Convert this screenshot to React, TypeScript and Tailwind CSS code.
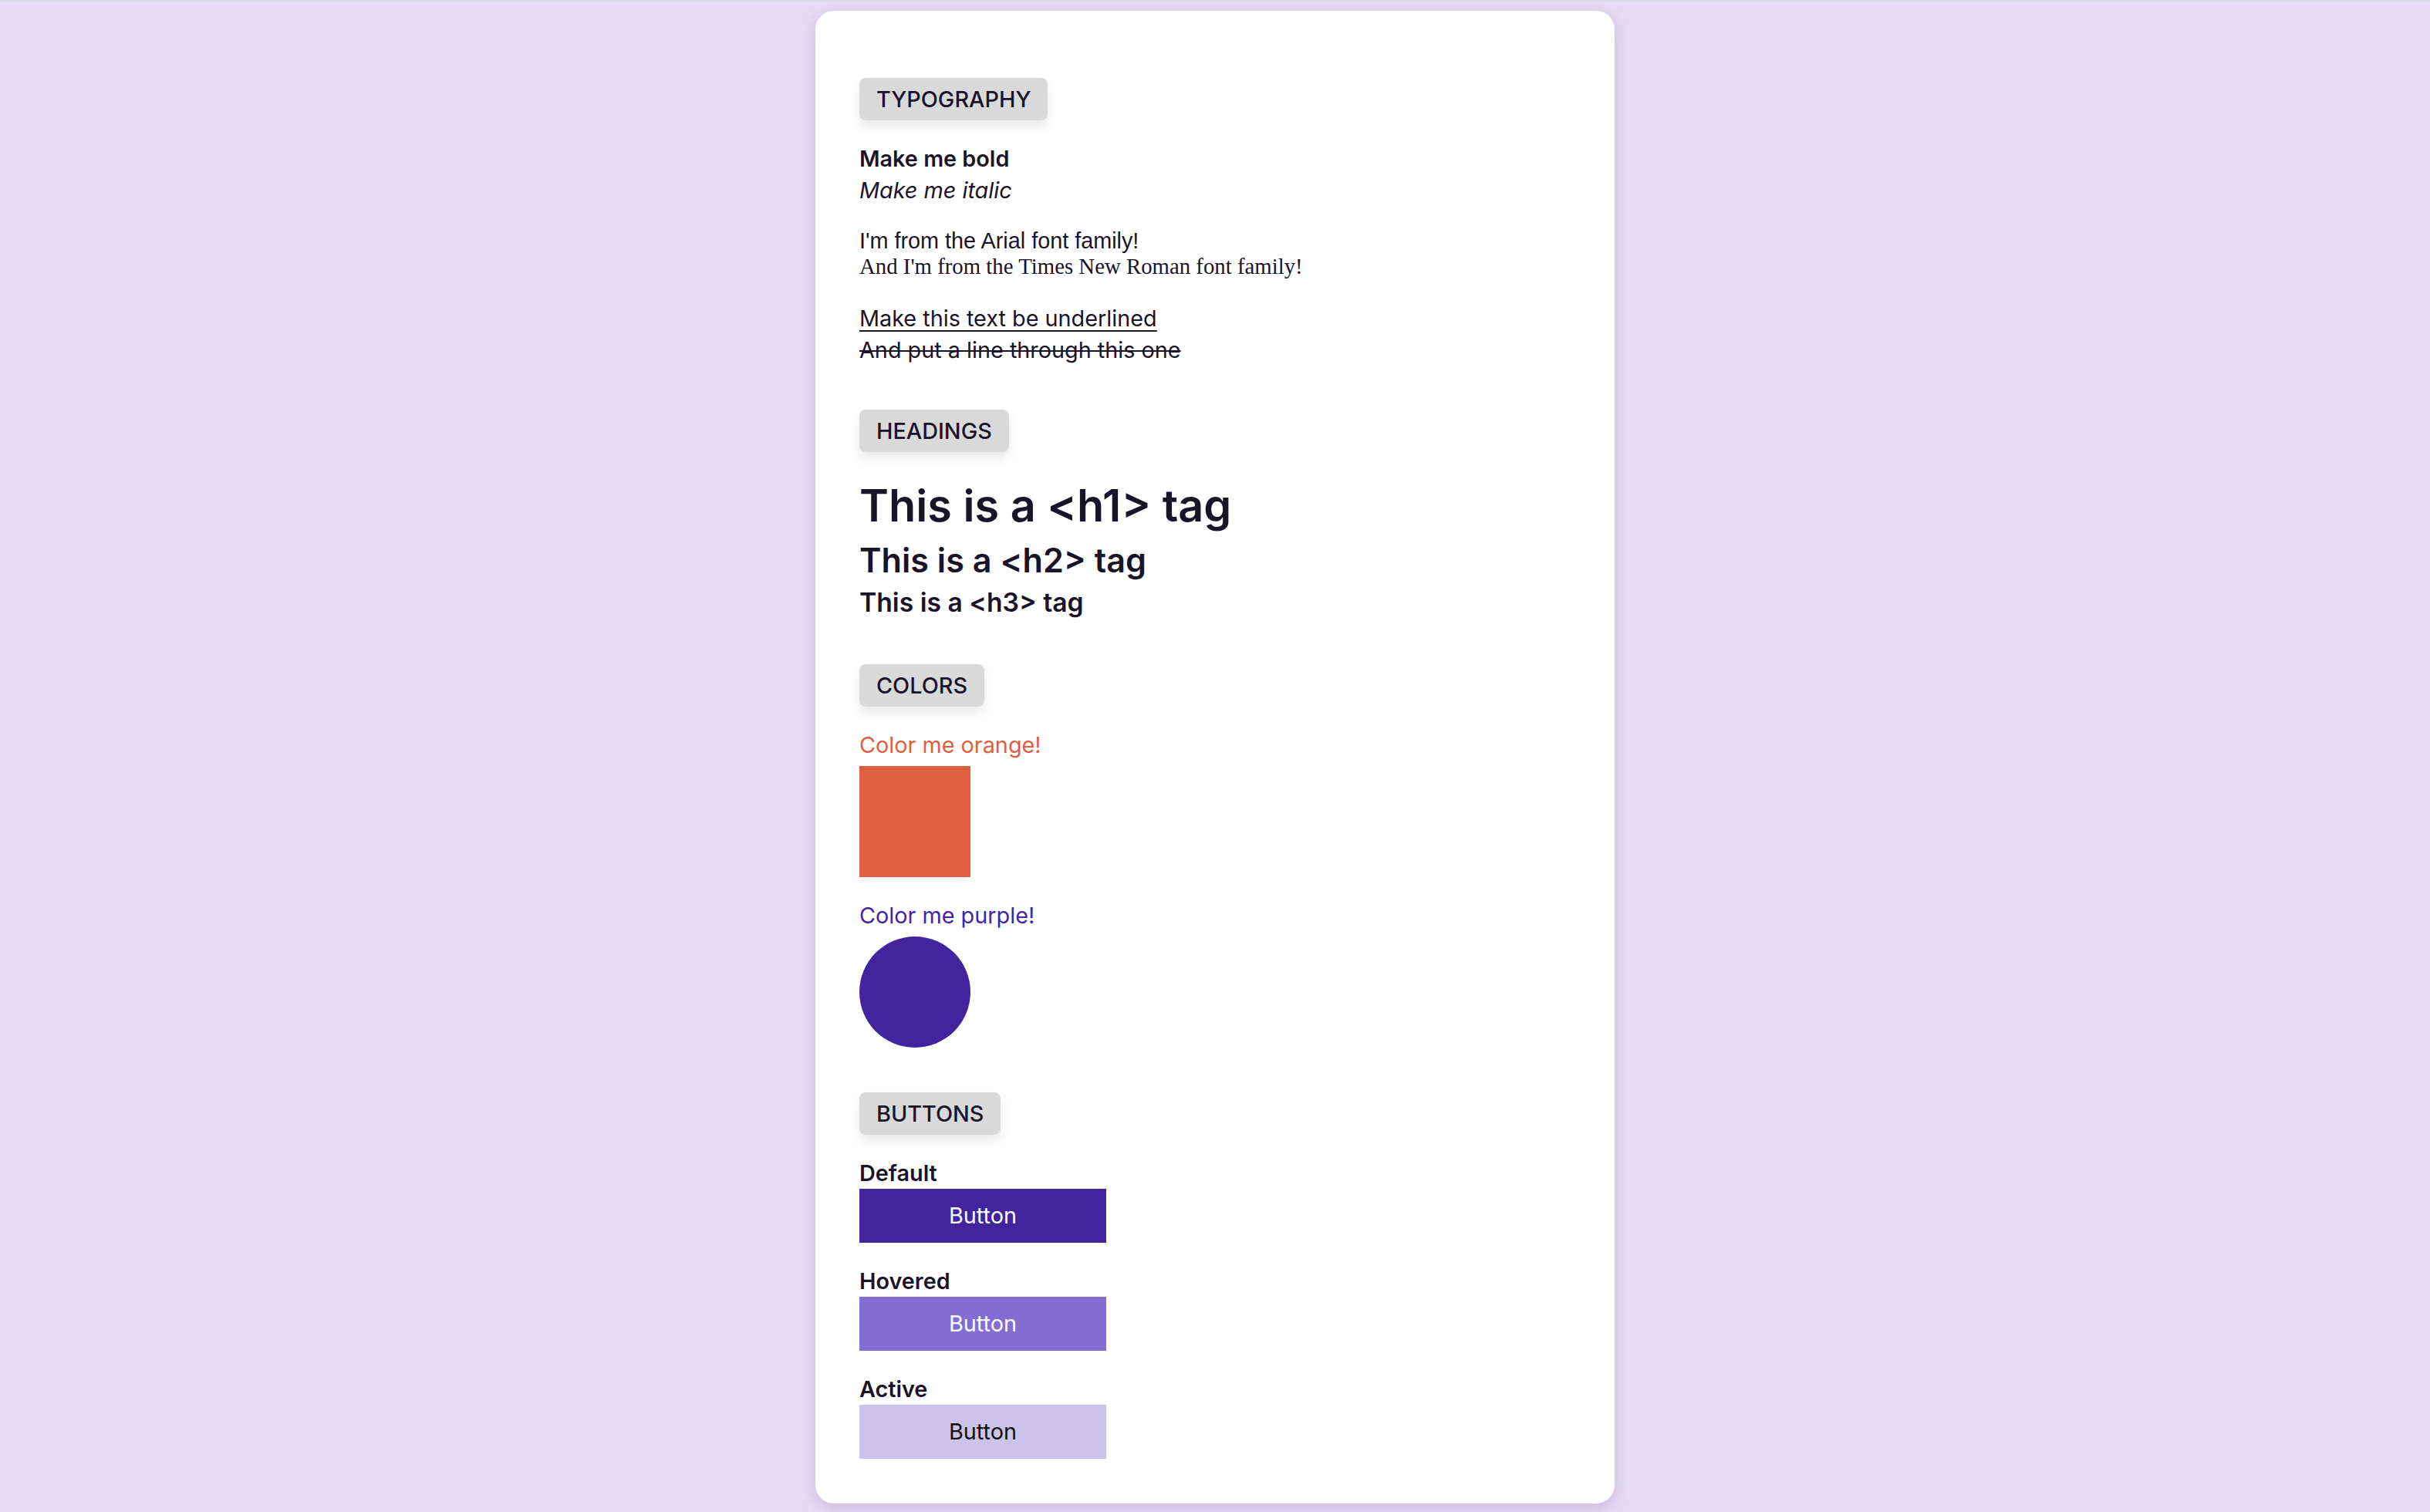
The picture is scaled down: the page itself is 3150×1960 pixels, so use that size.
import React from "react";

const ink = "text-[#1a1429]";

function Label({ children }: { children: React.ReactNode }) {
  return (
    <div className="flex">
      <div className="flex items-center h-[55px] px-[22px] rounded-[8px] bg-[#d9d9d9] shadow-[0_8px_14px_rgba(0,0,0,0.09)] text-[28.8px] leading-[34px] font-medium text-[#1a1429]">
        {children}
      </div>
    </div>
  );
}

function ButtonDemo({ title, bg, fg }: { title: string; bg: string; fg: string }) {
  return (
    <div className="flex flex-col">
      <div className={`text-[28.8px] leading-[41px] font-semibold ${ink}`}>{title}</div>
      <div className={`w-[320px] h-[70px] flex items-center justify-center text-[28.8px] leading-[34px] ${bg} ${fg}`}>
        Button
      </div>
    </div>
  );
}

export default function App() {
  return (
    <div className="min-h-screen bg-[#e6daf5] flex flex-col" style={{ fontFamily: "Inter, 'Noto Sans', sans-serif" }}>
      <div className="h-[2px] bg-[#dcdce4]" />
      <div className="flex justify-center pt-[12px] pb-[10px]">
        <div className="w-[1036px] bg-white rounded-[24px] shadow-[0_6px_18px_rgba(70,40,130,0.18)] pl-[57px] pr-[57px] pt-[87px] pb-[58px] flex flex-col">
          {/* TYPOGRAPHY */}
          <Label>TYPOGRAPHY</Label>
          <div className={`mt-[29px] text-[28.8px] leading-[41px] font-semibold ${ink}`}>Make me bold</div>
          <div className={`text-[28.8px] leading-[41px] italic ${ink}`}>Make me italic</div>
          <div className={`mt-[29px] text-[28.8px] leading-[33px] ${ink}`} style={{ fontFamily: "'Liberation Sans', Arial, sans-serif" }}>
            I'm from the Arial font family!
          </div>
          <div className={`text-[28.8px] leading-[33px] ${ink}`} style={{ fontFamily: "'Liberation Serif', 'Times New Roman', serif" }}>
            And I'm from the Times New Roman font family!
          </div>
          <div className={`mt-[30px] text-[28.8px] leading-[41px] underline decoration-[2px] underline-offset-[5px] ${ink}`}>
            Make this text be underlined
          </div>
          <div className={`text-[28.8px] leading-[41px] line-through decoration-[2px] ${ink}`}>And put a line through this one</div>

          {/* HEADINGS */}
          <div className="mt-[57px]">
            <Label>HEADINGS</Label>
          </div>
          <h1 className={`mt-[36px] text-[57.6px] leading-[67px] font-semibold ${ink}`}>This is a &lt;h1&gt; tag</h1>
          <h2 className={`mt-[12px] text-[43.2px] leading-[50px] font-semibold ${ink}`}>This is a &lt;h2&gt; tag</h2>
          <h3 className={`mt-[10px] text-[33.7px] leading-[40px] font-semibold ${ink}`}>This is a &lt;h3&gt; tag</h3>

          {/* COLORS */}
          <div className="mt-[60px]">
            <Label>COLORS</Label>
          </div>
          <div className="mt-[29px] text-[28.8px] leading-[41px] text-[#dc603f]">Color me orange!</div>
          <div className="mt-[7px] w-[144px] h-[144px] bg-[#dc603f]" />
          <div className="mt-[29px] text-[28.8px] leading-[41px] text-[#4324a3]">Color me purple!</div>
          <div className="mt-[7px] w-[144px] h-[144px] rounded-full bg-[#43249f]" />

          {/* BUTTONS */}
          <div className="mt-[58px]">
            <Label>BUTTONS</Label>
          </div>
          <div className="mt-[29px] flex flex-col gap-[29px]">
            <ButtonDemo title="Default" bg="bg-[#43249f]" fg="text-white" />
            <ButtonDemo title="Hovered" bg="bg-[#826dd3]" fg="text-white" />
            <ButtonDemo title="Active" bg="bg-[#ccc3eb]" fg="text-[#111111]" />
          </div>
        </div>
      </div>
    </div>
  );
}
